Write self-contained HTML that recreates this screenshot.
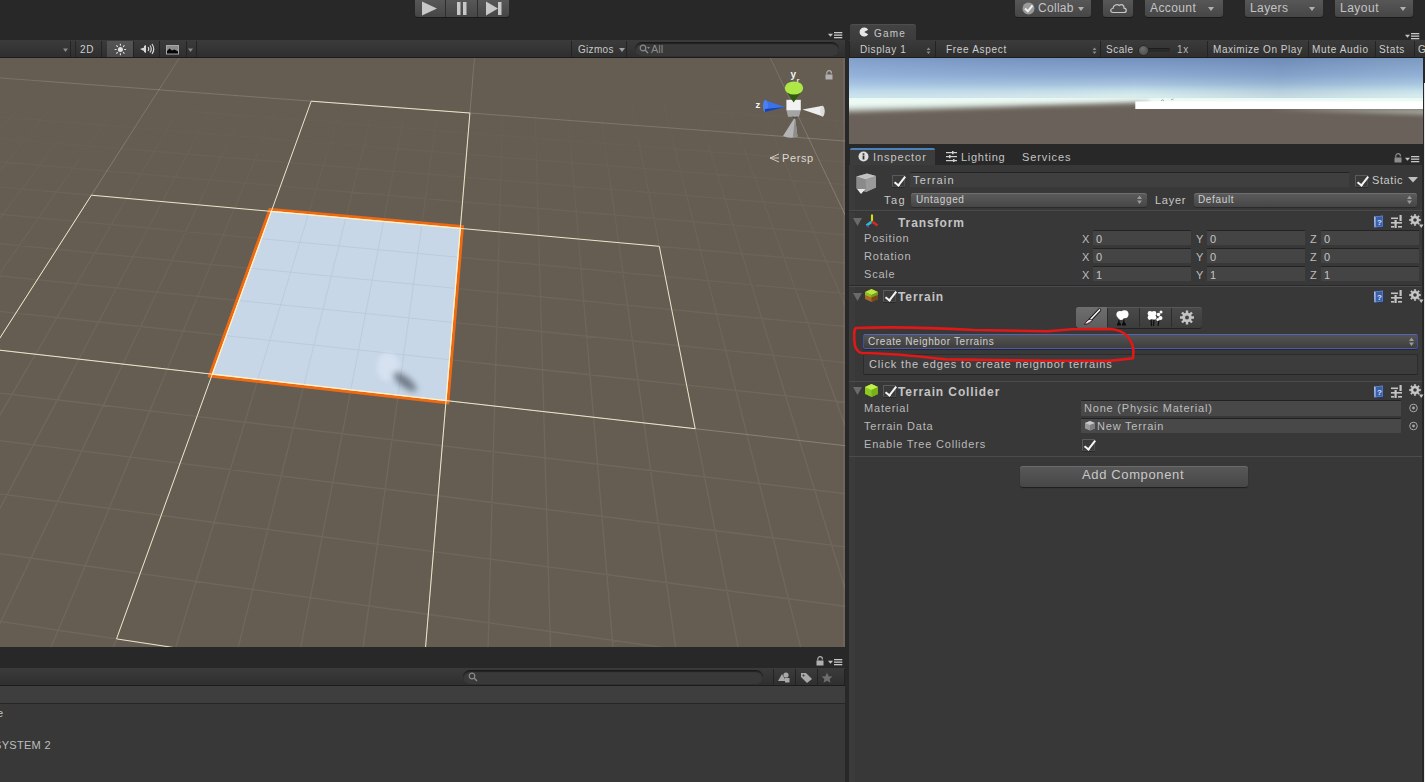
<!DOCTYPE html>
<html><head><meta charset="utf-8">
<style>
*{box-sizing:border-box;margin:0;padding:0}
html,body{width:1425px;height:782px;overflow:hidden;background:#282828;font-family:"Liberation Sans",sans-serif;color:#b4b4b4;font-size:11px}
.a{position:absolute}
.t{position:absolute;white-space:nowrap;line-height:1}
/* generic toolbar */
.tb{background:linear-gradient(#3b3b3b,#2f2f2f);border-bottom:1px solid #1c1c1c}
.btn{background:linear-gradient(#5a5a5a,#464646);border-radius:3px;box-shadow:0 1px 0 #1a1a1a, inset 0 1px 0 #6a6a6a}
.sep{position:absolute;width:1px;background:#232323}
.field{position:absolute;background:#454545;border-top:1px solid #202020;}
.lbl{position:absolute;white-space:nowrap;line-height:1;color:#b9b9b9;font-size:11px;letter-spacing:0.8px}
.hdr{position:absolute;white-space:nowrap;line-height:1;color:#c4c4c4;font-size:12px;font-weight:bold;letter-spacing:0.9px}
.ln{position:absolute;height:1px;left:849px;width:573px}
.dd{background:linear-gradient(#5c5c5c,#464646);border-radius:3px;box-shadow:0 1px 0 #2a2a2a, inset 0 1px 0 #6e6e6e}
.chk{width:13px;height:12px;background:#3a3a3a;border:1px solid #5a5a5a;border-bottom-color:#4a4a4a;border-right-color:#4e4e4e;border-radius:1px;box-shadow:0 1px 0 #2a2a2a}
.chk::after{content:"";position:absolute;left:4px;top:-2px;width:3.5px;height:10px;border:solid #f6f6f6;border-width:0 2.4px 2.4px 0;transform:rotate(38deg)}
.xyz{position:absolute;left:1081px;width:338px;height:16px}
.xyz span{position:absolute;top:4px;font-size:11px;color:#bdbdbd;line-height:1}
.xyz i{position:absolute;top:0;height:15px;background:#444;border-top:1px solid #232323;font-style:normal;font-size:11px;color:#c4c4c4;padding:3px 0 0 3px;line-height:1}
.xyz span:nth-child(1){left:1px}.xyz i:nth-child(2){left:12px;width:98px}
.xyz span:nth-child(3){left:115px}.xyz i:nth-child(4){left:126px;width:98px}
.xyz span:nth-child(5){left:229px}.xyz i:nth-child(6){left:240px;width:98px}
.help{width:11px;height:13px;background:linear-gradient(135deg,#8aa8d8,#3a5a98);border-radius:1px;box-shadow:1px 1px 0 #1c2c50}
.help::after{content:"?";position:absolute;left:2.5px;top:1px;font-size:9px;font-weight:bold;color:#e0e8f8;line-height:1}
.preset{width:11px;height:13px;background:linear-gradient(#c8c8c8,#c8c8c8) 0 3px/7px 1.5px no-repeat,linear-gradient(#c8c8c8,#c8c8c8) 0 8px/4px 1.5px no-repeat,linear-gradient(#c8c8c8,#c8c8c8) 6px 8px/5px 1.5px no-repeat,linear-gradient(#c8c8c8,#c8c8c8) 8px 0/2.5px 6px no-repeat,linear-gradient(#c8c8c8,#c8c8c8) 4px 6px/2.5px 6px no-repeat}
.gear{width:14px;height:14px}
.gear::before{content:"";position:absolute;left:1px;top:1px;width:10px;height:10px;border-radius:50%;background:radial-gradient(circle,#383838 2px,#c4c4c4 2.5px);box-shadow:0 -2px 0 -3px #c4c4c4}
.gear::after{content:"";position:absolute;left:10px;top:9px;border:3px solid transparent;border-top:4px solid #c4c4c4}
</style></head><body>

<!-- ============ TOP TOOLBAR ============ -->
<div class="a btn" style="left:415px;top:-3px;width:94px;height:20px;border-radius:0 0 3px 3px"></div>
<div class="sep" style="left:445px;top:0;height:17px;background:#2e2e2e"></div>
<div class="sep" style="left:477px;top:0;height:17px;background:#2e2e2e"></div>
<svg class="a" style="left:415px;top:0" width="94" height="18">
  <path d="M7 1.5 L22 8.5 L7 15.5 Z" fill="#c8c8c8"/>
  <rect x="42" y="2" width="3.5" height="13" fill="#c8c8c8"/><rect x="48" y="2" width="3.5" height="13" fill="#c8c8c8"/>
  <path d="M71 1.5 L83 8.5 L71 15.5 Z" fill="#c8c8c8"/><rect x="83" y="2" width="3.5" height="13" fill="#c8c8c8"/>
</svg>

<div class="a btn" style="left:1015px;top:-3px;width:76px;height:20px"></div>
<svg class="a" style="left:1022px;top:2px" width="14" height="14"><circle cx="6.5" cy="6.5" r="6" fill="#9a9a9a"/><path d="M3 6.5 L5.8 9.3 L10.5 3.5" stroke="#f0f0f0" stroke-width="2" fill="none"/></svg>
<div class="t" style="left:1038px;top:2px;font-size:12px;color:#c4c4c4;letter-spacing:0.3px">Collab</div>
<svg class="a" style="left:1078px;top:7px" width="7" height="5"><path d="M0 0 L6 0 L3 4 Z" fill="#b0b0b0"/></svg>

<div class="a btn" style="left:1103px;top:-3px;width:30px;height:20px"></div>
<svg class="a" style="left:1109px;top:2px" width="19" height="12"><path d="M4 10.5 C1 10.5 1 6.5 4 6.5 C4 3 8 1.5 10.5 3.5 C12 1.5 15.5 3 15 6.2 C18 6.5 18 10.5 15 10.5 Z" fill="none" stroke="#c8c8c8" stroke-width="1.2"/></svg>

<div class="a btn" style="left:1145px;top:-3px;width:78px;height:20px"></div>
<div class="t" style="left:1150px;top:2px;font-size:12px;color:#c4c4c4;letter-spacing:0.4px">Account</div>
<svg class="a" style="left:1208px;top:7px" width="7" height="5"><path d="M0 0 L6 0 L3 4 Z" fill="#b0b0b0"/></svg>

<div class="a btn" style="left:1245px;top:-3px;width:78px;height:20px"></div>
<div class="t" style="left:1250px;top:2px;font-size:12px;color:#c4c4c4;letter-spacing:0.4px">Layers</div>
<svg class="a" style="left:1309px;top:7px" width="7" height="5"><path d="M0 0 L6 0 L3 4 Z" fill="#b0b0b0"/></svg>

<div class="a btn" style="left:1335px;top:-3px;width:78px;height:20px"></div>
<div class="t" style="left:1340px;top:2px;font-size:12px;color:#c4c4c4;letter-spacing:0.5px">Layout</div>
<svg class="a" style="left:1400px;top:7px" width="7" height="5"><path d="M0 0 L6 0 L3 4 Z" fill="#b0b0b0"/></svg>

<!-- SCENE_START -->
<svg class="a" style="left:0;top:58px" width="845" height="589" viewBox="0 0 845 589">
<rect width="845" height="589" fill="#655c52"/>
<path d="M-85.2,26.6L-103.8,43.8M-103.8,43.8L-123.7,62.1M-39.7,12.5L-56.5,28.8M-56.5,28.8L-74.4,46.1M-11.6,14.5L-27.6,31.0M-27.6,31.0L-44.7,48.5M16.7,16.6L1.5,33.2M1.5,33.2L-14.7,50.8M45.3,18.8L30.8,35.5M30.8,35.5L15.5,53.2M74.0,20.9L60.4,37.7M60.4,37.7L46.0,55.6M103.0,23.0L90.3,40.0M90.3,40.0L76.7,58.1M132.3,25.2L120.4,42.3M120.4,42.3L107.7,60.5M201.1,13.2L191.5,29.6M191.5,29.6L181.3,47.0M230.2,15.3L221.5,31.8M221.5,31.8L212.2,49.3M259.5,17.4L251.7,34.0M251.7,34.0L243.3,51.7M289.1,19.5L282.1,36.3M282.1,36.3L274.7,54.1M319.0,21.7L312.8,38.6M312.8,38.6L306.3,56.6M349.0,23.8L343.8,40.9M343.8,40.9L338.3,59.0M379.3,26.0L375.0,43.2M375.0,43.2L370.5,61.5M413.1,11.9L409.9,28.2M409.9,28.2L406.5,45.5M443.0,13.9L440.7,30.4M440.7,30.4L438.3,47.9M503.5,18.2L503.1,34.9M503.1,34.9L502.6,52.6M534.2,20.3L534.7,37.1M534.7,37.1L535.2,55.0M565.1,22.4L566.5,39.4M566.5,39.4L568.0,57.5M596.2,24.6L598.6,41.7M598.6,41.7L601.2,59.9M627.6,26.8L631.0,44.0M655.1,12.6L659.2,29.0M659.2,29.0L663.6,46.4M686.1,14.7L691.2,31.2M691.2,31.2L696.6,48.7M717.3,16.8L723.3,33.4M723.3,33.4L729.8,51.1M748.7,18.9L755.8,35.7M755.8,35.7L763.3,53.5M812.4,23.2L821.4,40.3M821.4,40.3L831.1,58.4M844.6,25.4L854.7,42.6M866.6,11.3L877.1,27.6M877.1,27.6L888.2,44.9M898.3,13.4L909.8,29.8M909.8,29.8L922.0,47.3M697.1,17.5L739.1,20.3M739.1,20.3L781.4,23.2M781.4,23.2L824.3,26.1M824.3,26.1L867.6,29.0M867.6,29.0L911.4,32.0M493.3,20.3L534.3,23.1M534.3,23.1L575.7,26.0M575.7,26.0L617.6,29.0M617.6,29.0L660.0,31.9M660.0,31.9L702.8,34.9M702.8,34.9L746.1,38.0M746.1,38.0L789.9,41.0M789.9,41.0L834.2,44.1M834.2,44.1L879.0,47.2M879.0,47.2L924.3,50.4M248.0,20.2L287.6,23.1M287.6,23.1L327.7,26.0M327.7,26.0L368.2,28.9M368.2,28.9L409.2,31.9M409.2,31.9L450.6,34.8M450.6,34.8L492.5,37.9M492.5,37.9L534.8,40.9M534.8,40.9L577.6,44.0M577.6,44.0L620.9,47.1M620.9,47.1L664.6,50.3M664.6,50.3L708.9,53.5M-90.7,31.7L-52.1,34.7M-52.1,34.7L-13.2,37.7M-13.2,37.7L26.3,40.8M26.3,40.8L66.1,43.8M66.1,43.8L106.4,47.0M106.4,47.0L147.2,50.1M147.2,50.1L188.4,53.3M-110.6,50.0L-70.9,53.2" stroke="#8a8174" stroke-opacity="0.04" stroke-width="1.4" fill="none"/>
<path d="M-123.7,62.1L-144.9,81.6M-74.4,46.1L-93.4,64.6M-93.4,64.6L-113.6,84.2M-44.7,48.5L-62.8,67.1M-62.8,67.1L-82.1,86.9M-14.7,50.8L-32.0,69.6M-32.0,69.6L-50.3,89.6M15.5,53.2L-0.8,72.1M-0.8,72.1L-18.3,92.3M46.0,55.6L30.5,74.7M30.5,74.7L14.1,95.1M76.7,58.1L62.2,77.3M62.2,77.3L46.8,97.9M107.7,60.5L94.2,79.9M94.2,79.9L79.7,100.7M181.3,47.0L170.5,65.5M170.5,65.5L158.9,85.3M212.2,49.3L202.3,68.0M202.3,68.0L191.7,87.9M243.3,51.7L234.4,70.6M234.4,70.6L224.9,90.7M274.7,54.1L266.7,73.1M266.7,73.1L258.3,93.4M306.3,56.6L299.4,75.7M299.4,75.7L292.0,96.2M338.3,59.0L332.3,78.3M332.3,78.3L326.0,99.0M370.5,61.5L365.6,81.0M406.5,45.5L402.9,63.9M402.9,63.9L399.1,83.6M438.3,47.9L435.7,66.5M435.7,66.5L432.9,86.3M502.6,52.6L502.1,71.5M502.1,71.5L501.5,91.7M535.2,55.0L535.7,74.1M535.7,74.1L536.3,94.5M568.0,57.5L569.7,76.7M569.7,76.7L571.4,97.3M601.2,59.9L603.9,79.3M603.9,79.3L606.8,100.1M631.0,44.0L634.6,62.4M634.6,62.4L638.4,82.0M663.6,46.4L668.3,64.9M668.3,64.9L673.3,84.6M696.6,48.7L702.3,67.4M702.3,67.4L708.5,87.3M729.8,51.1L736.6,70.0M736.6,70.0L743.9,90.1M763.3,53.5L771.2,72.5M771.2,72.5L779.8,92.8M831.1,58.4L841.4,77.7M841.4,77.7L852.4,98.3M854.7,42.6L865.5,60.9M865.5,60.9L876.9,80.3M888.2,44.9L900.1,63.3M900.1,63.3L912.8,83.0M922.0,47.3L935.1,65.8M935.1,65.8L949.0,85.7M708.9,53.5L753.7,56.7M753.7,56.7L799.0,60.0M799.0,60.0L844.8,63.3M844.8,63.3L891.1,66.7M891.1,66.7L938.0,70.1M188.4,53.3L230.1,56.5M230.1,56.5L272.3,59.8M272.3,59.8L315.0,63.1M315.0,63.1L358.1,66.4M358.1,66.4L401.8,69.8M401.8,69.8L446.0,73.2M446.0,73.2L490.7,76.7M490.7,76.7L535.9,80.2M535.9,80.2L581.7,83.7M581.7,83.7L628.0,87.3M628.0,87.3L674.9,90.9M-70.9,53.2L-30.7,56.4M-30.7,56.4L9.9,59.7M9.9,59.7L51.0,63.0M51.0,63.0L92.6,66.3M92.6,66.3L134.7,69.7M134.7,69.7L177.2,73.1M177.2,73.1L220.3,76.5M220.3,76.5L263.9,80.0M263.9,80.0L307.9,83.6M307.9,83.6L352.6,87.1M352.6,87.1L397.7,90.8M-131.8,69.5L-90.9,73.0M-90.9,73.0L-49.4,76.4M-49.4,76.4L-7.5,79.9M-7.5,79.9L34.9,83.4M34.9,83.4L77.8,87.0M77.8,87.0L121.3,90.6" stroke="#8a8174" stroke-opacity="0.09" stroke-width="1.4" fill="none"/>
<path d="M-144.9,81.6L-167.5,102.4M-167.5,102.4L-191.7,124.7M-113.6,84.2L-135.3,105.2M-135.3,105.2L-158.5,127.7M-82.1,86.9L-102.8,108.1M-102.8,108.1L-124.9,130.8M-50.3,89.6L-70.0,111.0M-70.0,111.0L-91.1,133.9M-18.3,92.3L-36.9,113.9M-36.9,113.9L-56.9,137.1M14.1,95.1L-3.5,116.9M-3.5,116.9L-22.4,140.2M46.8,97.9L30.2,119.9M30.2,119.9L12.5,143.4M79.7,100.7L64.3,122.9M158.9,85.3L146.6,106.4M146.6,106.4L133.3,129.0M191.7,87.9L180.5,109.2M180.5,109.2L168.4,132.1M224.9,90.7L214.7,112.2M214.7,112.2L203.8,135.2M258.3,93.4L249.2,115.1M249.2,115.1L239.5,138.3M292.0,96.2L284.1,118.1M284.1,118.1L275.6,141.5M326.0,99.0L319.2,121.0M319.2,121.0L312.0,144.7M365.6,81.0L360.4,101.8M360.4,101.8L354.8,124.1M399.1,83.6L395.0,104.6M395.0,104.6L390.6,127.1M432.9,86.3L430.0,107.5M430.0,107.5L426.9,130.2M501.5,91.7L501.0,113.3M501.0,113.3L500.3,136.5M536.3,94.5L536.9,116.3M536.9,116.3L537.6,139.6M571.4,97.3L573.3,119.2M573.3,119.2L575.3,142.8M606.8,100.1L609.9,122.3M638.4,82.0L642.6,102.9M642.6,102.9L647.0,125.3M673.3,84.6L678.6,105.7M678.6,105.7L684.3,128.4M708.5,87.3L715.0,108.6M715.0,108.6L722.1,131.5M743.9,90.1L751.8,111.5M751.8,111.5L760.2,134.6M779.8,92.8L788.9,114.5M788.9,114.5L798.6,137.7M852.4,98.3L864.1,120.4M864.1,120.4L876.7,144.1M876.9,80.3L889.2,101.2M889.2,101.2L902.3,123.5M912.8,83.0L926.3,104.0M926.3,104.0L940.8,126.5M949.0,85.7L963.8,106.9M963.8,106.9L979.7,129.6M674.9,90.9L722.3,94.6M722.3,94.6L770.4,98.3M770.4,98.3L819.0,102.1M819.0,102.1L868.2,105.9M868.2,105.9L918.1,109.7M918.1,109.7L968.5,113.6M397.7,90.8L443.4,94.4M443.4,94.4L489.7,98.1M489.7,98.1L536.5,101.9M536.5,101.9L583.9,105.7M583.9,105.7L632.0,109.5M632.0,109.5L680.6,113.4M680.6,113.4L729.8,117.4M729.8,117.4L779.6,121.4M779.6,121.4L830.1,125.4M830.1,125.4L881.2,129.5M881.2,129.5L933.0,133.7M121.3,90.6L165.2,94.3M165.2,94.3L209.7,98.0M209.7,98.0L254.8,101.7M254.8,101.7L300.4,105.5M300.4,105.5L346.6,109.4M346.6,109.4L393.3,113.2M393.3,113.2L440.7,117.2M440.7,117.2L488.6,121.2M488.6,121.2L537.2,125.2M537.2,125.2L586.4,129.3M586.4,129.3L636.2,133.4M-154.5,90.4L-112.3,94.1M-112.3,94.1L-69.5,97.8M-69.5,97.8L-26.2,101.5M-26.2,101.5L17.6,105.3M17.6,105.3L62.0,109.2M62.0,109.2L106.9,113.0M106.9,113.0L152.4,117.0M152.4,117.0L198.4,121.0M198.4,121.0L245.1,125.0M245.1,125.0L292.3,129.1M292.3,129.1L340.2,133.2M-178.8,112.9L-135.2,116.8M-135.2,116.8L-91.0,120.8M-91.0,120.8L-46.3,124.8M-46.3,124.8L-1.0,128.9M-1.0,128.9L44.9,133.0" stroke="#8a8174" stroke-opacity="0.13" stroke-width="1.4" fill="none"/>
<path d="M-191.7,124.7L-217.7,148.6M-217.7,148.6L-245.6,174.4M-158.5,127.7L-183.4,151.9M-183.4,151.9L-210.2,177.9M-124.9,130.8L-148.7,155.2M-148.7,155.2L-174.3,181.5M-91.1,133.9L-113.7,158.6M-113.7,158.6L-138.1,185.1M-56.9,137.1L-78.4,161.9M-78.4,161.9L-101.5,188.7M-22.4,140.2L-42.7,165.4M-42.7,165.4L-64.5,192.4M12.5,143.4L-6.6,168.8M-6.6,168.8L-27.2,196.2M64.3,122.9L47.7,146.7M47.7,146.7L29.8,172.3M133.3,129.0L119.1,153.2M119.1,153.2L103.8,179.4M168.4,132.1L155.4,156.6M155.4,156.6L141.4,183.0M203.8,135.2L192.0,159.9M192.0,159.9L179.4,186.6M239.5,138.3L229.0,163.3M229.0,163.3L217.8,190.3M275.6,141.5L266.4,166.8M266.4,166.8L256.6,194.0M312.0,144.7L304.2,170.2M354.8,124.1L348.8,148.0M348.8,148.0L342.3,173.7M390.6,127.1L385.9,151.3M385.9,151.3L380.9,177.3M426.9,130.2L423.5,154.6M423.5,154.6L419.8,180.9M500.3,136.5L499.7,161.3M499.7,161.3L498.9,188.1M537.6,139.6L538.3,164.7M538.3,164.7L539.1,191.8M575.3,142.8L577.4,168.2M577.4,168.2L579.7,195.6M609.9,122.3L613.3,146.1M613.3,146.1L616.9,171.7M647.0,125.3L651.7,149.3M651.7,149.3L656.8,175.2M684.3,128.4L690.5,152.6M690.5,152.6L697.0,178.8M722.1,131.5L729.6,156.0M729.6,156.0L737.8,182.4M760.2,134.6L769.2,159.3M769.2,159.3L778.9,186.0M798.6,137.7L809.1,162.7M809.1,162.7L820.5,189.7M876.7,144.1L890.3,169.6M902.3,123.5L916.4,147.4M916.4,147.4L931.5,173.1M940.8,126.5L956.4,150.7M956.4,150.7L973.1,176.7M979.7,129.6L996.8,154.0M996.8,154.0L1015.2,180.3M933.0,133.7L985.5,137.9M636.2,133.4L686.7,137.6M686.7,137.6L737.8,141.9M737.8,141.9L789.6,146.2M789.6,146.2L842.1,150.6M842.1,150.6L895.3,155.0M895.3,155.0L949.2,159.5M949.2,159.5L1003.8,164.0M340.2,133.2L388.6,137.4M388.6,137.4L437.7,141.7M437.7,141.7L487.5,146.0M487.5,146.0L537.9,150.3M537.9,150.3L589.0,154.7M589.0,154.7L640.8,159.2M640.8,159.2L693.3,163.8M693.3,163.8L746.4,168.4M746.4,168.4L800.4,173.0M800.4,173.0L855.0,177.7M855.0,177.7L910.5,182.5M44.9,133.0L91.4,137.2M91.4,137.2L138.5,141.4M138.5,141.4L186.2,145.7M186.2,145.7L234.6,150.1M234.6,150.1L283.6,154.5M283.6,154.5L333.2,158.9M333.2,158.9L383.6,163.5M383.6,163.5L434.6,168.1M434.6,168.1L486.3,172.7M486.3,172.7L538.7,177.4M538.7,177.4L591.8,182.2M-205.0,137.0L-159.9,141.2M-159.9,141.2L-114.2,145.5M-114.2,145.5L-67.9,149.8M-67.9,149.8L-21.0,154.2M-21.0,154.2L26.5,158.7M26.5,158.7L74.7,163.2M74.7,163.2L123.6,167.8M123.6,167.8L173.1,172.4M173.1,172.4L223.3,177.1M223.3,177.1L274.2,181.9M-233.2,162.9L-186.5,167.5M-186.5,167.5L-139.2,172.1M-139.2,172.1L-91.2,176.8M-91.2,176.8L-42.6,181.6" stroke="#8a8174" stroke-opacity="0.17" stroke-width="1.4" fill="none"/>
<path d="M-245.6,174.4L-275.8,202.1M-275.8,202.1L-308.5,232.2M-210.2,177.9L-239.1,206.0M-239.1,206.0L-270.4,236.3M-174.3,181.5L-202.0,209.8M-202.0,209.8L-231.9,240.6M-138.1,185.1L-164.5,213.7M-164.5,213.7L-193.0,244.8M-101.5,188.7L-126.5,217.7M-126.5,217.7L-153.7,249.1M-64.5,192.4L-88.2,221.7M-88.2,221.7L-113.8,253.5M-27.2,196.2L-49.4,225.7M29.8,172.3L10.6,199.9M10.6,199.9L-10.2,229.8M103.8,179.4L87.3,207.6M87.3,207.6L69.5,238.1M141.4,183.0L126.3,211.5M126.3,211.5L110.0,242.4M179.4,186.6L165.8,215.4M165.8,215.4L151.0,246.7M217.8,190.3L205.6,219.4M205.6,219.4L192.4,251.0M256.6,194.0L245.9,223.4M245.9,223.4L234.3,255.4M304.2,170.2L295.8,197.7M295.8,197.7L286.6,227.5M342.3,173.7L335.4,201.5M335.4,201.5L327.8,231.6M380.9,177.3L375.4,205.4M375.4,205.4L369.5,235.8M419.8,180.9L415.9,209.2M415.9,209.2L411.6,240.0M498.9,188.1L498.1,217.1M498.1,217.1L497.3,248.5M539.1,191.8L540.0,221.1M540.0,221.1L540.9,252.9M579.7,195.6L582.2,225.2M616.9,171.7L620.8,199.3M620.8,199.3L625.0,229.2M656.8,175.2L662.2,203.1M662.2,203.1L668.2,233.4M697.0,178.8L704.2,207.0M704.2,207.0L711.9,237.6M737.8,182.4L746.6,210.9M746.6,210.9L756.1,241.8M778.9,186.0L789.4,214.8M789.4,214.8L800.8,246.1M820.5,189.7L832.7,218.8M832.7,218.8L846.0,250.4M890.3,169.6L904.9,197.1M904.9,197.1L920.8,226.9M931.5,173.1L947.8,200.9M947.8,200.9L965.5,231.0M973.1,176.7L991.2,204.8M991.2,204.8L1010.8,235.2M1015.2,180.3L1035.1,208.6M1035.1,208.6L1056.6,239.4M910.5,182.5L966.7,187.4M966.7,187.4L1023.6,192.3M591.8,182.2L645.7,187.1M645.7,187.1L700.4,192.0M700.4,192.0L755.8,197.0M755.8,197.0L812.0,202.0M812.0,202.0L869.0,207.2M869.0,207.2L926.9,212.4M926.9,212.4L985.6,217.7M985.6,217.7L1045.1,223.0M274.2,181.9L325.8,186.8M325.8,186.8L378.1,191.7M378.1,191.7L431.1,196.6M431.1,196.6L485.0,201.7M485.0,201.7L539.5,206.8M539.5,206.8L594.9,212.0M594.9,212.0L651.1,217.3M651.1,217.3L708.1,222.6M708.1,222.6L766.0,228.1M766.0,228.1L824.7,233.6M824.7,233.6L884.3,239.2M-42.6,181.6L6.7,186.4M6.7,186.4L56.7,191.3M56.7,191.3L107.4,196.3M107.4,196.3L158.9,201.3M158.9,201.3L211.0,206.5M211.0,206.5L263.9,211.6M263.9,211.6L317.6,216.9M317.6,216.9L372.1,222.2M372.1,222.2L427.4,227.7M427.4,227.7L483.5,233.2M483.5,233.2L540.5,238.7M-263.7,191.0L-215.3,196.0M-215.3,196.0L-166.3,201.0M-166.3,201.0L-116.5,206.1M-116.5,206.1L-66.0,211.3M-66.0,211.3L-14.8,216.5M-14.8,216.5L37.2,221.8M37.2,221.8L89.9,227.3M89.9,227.3L143.4,232.7M143.4,232.7L197.7,238.3M-296.8,221.5L-246.6,226.9M-246.6,226.9L-195.7,232.3M-195.7,232.3L-144.0,237.9M-144.0,237.9L-91.5,243.5" stroke="#8a8174" stroke-opacity="0.21" stroke-width="1.4" fill="none"/>
<path d="M-308.5,232.2L-343.9,264.8M-343.9,264.8L-382.5,300.4M-270.4,236.3L-304.4,269.4M-304.4,269.4L-341.5,305.3M-231.9,240.6L-264.5,273.9M-264.5,273.9L-300.0,310.3M-193.0,244.8L-224.0,278.6M-224.0,278.6L-257.9,315.4M-153.7,249.1L-183.1,283.3M-183.1,283.3L-215.4,320.5M-113.8,253.5L-141.8,288.0M-141.8,288.0L-172.3,325.7M-49.4,225.7L-73.6,257.8M-73.6,257.8L-99.9,292.8M-10.2,229.8L-32.9,262.3M-32.9,262.3L-57.5,297.7M69.5,238.1L50.0,271.4M50.0,271.4L28.8,307.6M110.0,242.4L92.2,276.0M92.2,276.0L72.8,312.6M151.0,246.7L134.9,280.6M134.9,280.6L117.3,317.7M192.4,251.0L178.1,285.3M178.1,285.3L162.4,322.9M234.3,255.4L221.8,290.1M286.6,227.5L276.8,259.8M276.8,259.8L266.0,294.9M327.8,231.6L319.7,264.3M319.7,264.3L310.7,299.8M369.5,235.8L363.1,268.8M363.1,268.8L356.1,304.8M411.6,240.0L407.0,273.4M407.0,273.4L401.9,309.8M497.3,248.5L496.4,282.7M496.4,282.7L495.4,320.0M540.9,252.9L541.9,287.4M541.9,287.4L542.9,325.2M582.2,225.2L584.9,257.3M584.9,257.3L587.9,292.2M625.0,229.2L629.5,261.7M629.5,261.7L634.5,297.1M668.2,233.4L674.6,266.2M674.6,266.2L681.7,302.0M711.9,237.6L720.3,270.8M720.3,270.8L729.4,307.0M756.1,241.8L766.4,275.4M766.4,275.4L777.7,312.0M800.8,246.1L813.2,280.0M813.2,280.0L826.7,317.1M846.0,250.4L860.4,284.8M860.4,284.8L876.2,322.3M920.8,226.9L938.0,259.2M938.0,259.2L956.7,294.4M965.5,231.0L984.8,263.7M984.8,263.7L1005.7,299.3M1010.8,235.2L1032.1,268.2M1032.1,268.2L1055.3,304.2M1056.6,239.4L1080.0,272.8M1080.0,272.8L1105.5,309.2M884.3,239.2L944.8,244.8M944.8,244.8L1006.2,250.6M1006.2,250.6L1068.5,256.4M540.5,238.7L598.3,244.4M598.3,244.4L657.0,250.1M657.0,250.1L716.5,256.0M716.5,256.0L777.0,261.9M777.0,261.9L838.5,267.9M838.5,267.9L900.9,274.0M900.9,274.0L964.3,280.3M964.3,280.3L1028.7,286.6M1028.7,286.6L1094.1,293.0M197.7,238.3L252.8,244.0M252.8,244.0L308.8,249.7M308.8,249.7L365.6,255.5M365.6,255.5L423.3,261.4M423.3,261.4L481.9,267.4M481.9,267.4L541.5,273.5M541.5,273.5L601.9,279.7M601.9,279.7L663.3,286.0M663.3,286.0L725.7,292.4M725.7,292.4L789.1,298.9M789.1,298.9L853.6,305.5M-91.5,243.5L-38.2,249.3M-38.2,249.3L15.9,255.1M15.9,255.1L70.8,261.0M70.8,261.0L126.6,267.0M126.6,267.0L183.2,273.0M183.2,273.0L240.7,279.2M240.7,279.2L299.2,285.5M299.2,285.5L358.6,291.9M358.6,291.9L418.9,298.4M418.9,298.4L480.2,305.0M-372.1,290.8L-317.9,297.3M-317.9,297.3L-262.7,303.8M-262.7,303.8L-206.7,310.5" stroke="#8a8174" stroke-opacity="0.26" stroke-width="1.4" fill="none"/>
<path d="M-382.5,300.4L-424.8,339.3M-424.8,339.3L-471.2,382.0M-471.2,382.0L-522.4,429.2M-522.4,429.2L-579.2,481.5M-579.2,481.5L-642.5,539.8M-642.5,539.8L-713.6,605.3M-341.5,305.3L-382.1,344.7M-382.1,344.7L-426.7,388.0M-426.7,388.0L-475.9,435.8M-475.9,435.8L-530.6,488.8M-530.6,488.8L-591.6,548.1M-591.6,548.1L-660.2,614.6M-300.0,310.3L-338.8,350.2M-338.8,350.2L-381.6,394.1M-381.6,394.1L-428.8,442.5M-428.8,442.5L-481.3,496.3M-481.3,496.3L-539.9,556.4M-539.9,556.4L-605.8,624.1M-257.9,315.4L-295.0,355.8M-295.0,355.8L-335.9,400.2M-335.9,400.2L-381.0,449.3M-381.0,449.3L-431.2,503.9M-431.2,503.9L-487.3,565.0M-487.3,565.0L-550.5,633.7M-215.4,320.5L-250.7,361.4M-250.7,361.4L-289.5,406.4M-289.5,406.4L-332.5,456.2M-332.5,456.2L-380.4,511.6M-380.4,511.6L-433.9,573.7M-433.9,573.7L-494.3,643.5M-172.3,325.7L-205.7,367.1M-205.7,367.1L-242.5,412.8M-242.5,412.8L-283.3,463.3M-283.3,463.3L-328.8,519.5M-328.8,519.5L-379.7,582.5M-379.7,582.5L-437.0,653.5M-99.9,292.8L-128.6,331.0M-128.6,331.0L-160.2,372.9M-160.2,372.9L-194.9,419.2M-194.9,419.2L-233.4,470.4M-233.4,470.4L-276.4,527.4M-276.4,527.4L-324.5,591.4M-324.5,591.4L-378.8,663.6M-57.5,297.7L-84.4,336.3M-84.4,336.3L-114.0,378.8M-114.0,378.8L-146.6,425.6M-146.6,425.6L-182.8,477.6M-182.8,477.6L-223.2,535.5M-223.2,535.5L-268.4,600.5M-268.4,600.5L-319.6,674.0M28.8,307.6L5.7,347.2M5.7,347.2L-19.8,390.8M-19.8,390.8L-48.0,438.9M-48.0,438.9L-79.3,492.4M-79.3,492.4L-114.2,552.1M-114.2,552.1L-153.5,619.2M-153.5,619.2L-198.0,695.2M72.8,312.6L51.6,352.7M51.6,352.7L28.2,396.9M28.2,396.9L2.4,445.7M2.4,445.7L-26.3,499.9M-26.3,499.9L-58.4,560.5M-58.4,560.5L-94.6,628.7M-94.6,628.7L-135.5,706.1M117.3,317.7L98.1,358.3M98.1,358.3L76.9,403.1M76.9,403.1L53.5,452.5M53.5,452.5L27.4,507.6M27.4,507.6L-1.8,569.1M-1.8,569.1L-34.6,638.5M-34.6,638.5L-71.9,717.2M162.4,322.9L145.2,364.0M145.2,364.0L126.2,409.3M126.2,409.3L105.3,459.5M105.3,459.5L81.9,515.4M81.9,515.4L55.8,577.9M55.8,577.9L26.4,648.4M26.4,648.4L-7.1,728.5M221.8,290.1L208.0,328.1M208.0,328.1L192.9,369.8M192.9,369.8L176.3,415.7M176.3,415.7L157.9,466.6M157.9,466.6L137.3,523.3M137.3,523.3L114.3,586.8M114.3,586.8L88.4,658.4M88.4,658.4L58.9,740.0M266.0,294.9L254.2,333.4M254.2,333.4L241.3,375.6M241.3,375.6L227.0,422.2M227.0,422.2L211.2,473.8M211.2,473.8L193.6,531.3M193.6,531.3L173.8,595.8M173.8,595.8L151.5,668.7M151.5,668.7L126.1,751.7M310.7,299.8L301.0,338.8M301.0,338.8L290.3,381.5M290.3,381.5L278.5,428.7M278.5,428.7L265.4,481.0M265.4,481.0L250.7,539.4M250.7,539.4L234.3,605.0M234.3,605.0L215.7,679.1M215.7,679.1L194.6,763.6M356.1,304.8L348.4,344.2M348.4,344.2L340.0,387.5M340.0,387.5L330.6,435.3M330.6,435.3L320.3,488.4M320.3,488.4L308.8,547.7M308.8,547.7L295.8,614.3M295.8,614.3L281.1,689.7M281.1,689.7L264.4,775.8M401.9,309.8L396.4,349.7M396.4,349.7L390.3,393.6M390.3,393.6L383.6,442.1M383.6,442.1L376.1,495.9M376.1,495.9L367.7,556.1M367.7,556.1L358.3,623.8M358.3,623.8L347.7,700.5M347.7,700.5L335.5,788.2M495.4,320.0L494.2,360.9M494.2,360.9L493.0,405.9M493.0,405.9L491.7,455.8M491.7,455.8L490.2,511.3M490.2,511.3L488.5,573.3M488.5,573.3L486.6,643.3M486.6,643.3L484.4,722.7M484.4,722.7L482.0,813.7M542.9,325.2L544.1,366.6M544.1,366.6L545.4,412.3M545.4,412.3L546.9,462.8M546.9,462.8L548.5,519.1M548.5,519.1L550.3,582.2M550.3,582.2L552.4,653.3M552.4,653.3L554.7,734.2M554.7,734.2L557.4,826.9M587.9,292.2L591.1,330.5M591.1,330.5L594.7,372.4M594.7,372.4L598.6,418.7M598.6,418.7L602.9,469.9M602.9,469.9L607.8,527.1M607.8,527.1L613.2,591.1M613.2,591.1L619.3,663.5M619.3,663.5L626.3,745.8M626.3,745.8L634.3,840.3M634.5,297.1L639.9,335.8M639.9,335.8L645.9,378.3M645.9,378.3L652.5,425.2M652.5,425.2L659.8,477.2M659.8,477.2L668.0,535.2M668.0,535.2L677.1,600.2M677.1,600.2L687.4,673.8M687.4,673.8L699.2,757.6M699.2,757.6L712.8,854.0M681.7,302.0L689.4,341.2M689.4,341.2L697.8,384.2M697.8,384.2L707.2,431.8M707.2,431.8L717.5,484.5M717.5,484.5L729.1,543.4M729.1,543.4L742.1,609.5M742.1,609.5L756.8,684.3M756.8,684.3L773.5,769.7M773.5,769.7L792.8,867.9M729.4,307.0L739.4,346.7M739.4,346.7L750.4,390.3M750.4,390.3L762.6,438.4M762.6,438.4L776.1,492.0M776.1,492.0L791.2,551.7M791.2,551.7L808.1,618.9M808.1,618.9L827.3,695.0M827.3,695.0L849.3,782.0M849.3,782.0L874.6,882.2M777.7,312.0L790.1,352.2M790.1,352.2L803.7,396.4M803.7,396.4L818.8,445.2M818.8,445.2L835.5,499.5M835.5,499.5L854.3,560.2M854.3,560.2L875.3,628.5M875.3,628.5L899.2,706.0M899.2,706.0L926.5,794.5M926.5,794.5L958.0,896.7M826.7,317.1L841.5,357.8M841.5,357.8L857.8,402.6M857.8,402.6L875.8,452.1M875.8,452.1L895.9,507.2M895.9,507.2L918.4,568.8M918.4,568.8L943.6,638.3M943.6,638.3L972.4,717.1M972.4,717.1L1005.2,807.3M1005.2,807.3L1043.2,911.6M876.2,322.3L893.5,363.5M893.5,363.5L912.6,408.9M912.6,408.9L933.7,459.1M933.7,459.1L957.2,515.0M957.2,515.0L983.5,577.6M983.5,577.6L1013.2,648.2M1013.2,648.2L1046.9,728.4M1046.9,728.4L1085.5,820.3M1085.5,820.3L1130.2,926.8M956.7,294.4L977.2,332.8M977.2,332.8L999.6,375.1M999.6,375.1L1024.4,421.7M1024.4,421.7L1051.9,473.3M1051.9,473.3L1082.6,530.9M1082.6,530.9L1117.0,595.5M1117.0,595.5L1155.8,668.5M1155.8,668.5L1200.1,751.7M1200.1,751.7L1250.9,847.2M1250.9,847.2L1310.0,958.1M1005.7,299.3L1028.6,338.2M1028.6,338.2L1053.8,381.0M1053.8,381.0L1081.6,428.2M1081.6,428.2L1112.4,480.6M1112.4,480.6L1146.8,539.1M1146.8,539.1L1185.4,604.7M1185.4,604.7L1229.1,679.0M1229.1,679.0L1278.8,763.6M1278.8,763.6L1336.1,861.0M1336.1,861.0L1402.8,974.3M1055.3,304.2L1080.7,343.6M1080.7,343.6L1108.6,387.0M1108.6,387.0L1139.5,434.9M1139.5,434.9L1173.7,488.0M1173.7,488.0L1212.0,547.4M1212.0,547.4L1254.9,614.1M1254.9,614.1L1303.6,689.6M1303.6,689.6L1359.1,775.8M1359.1,775.8L1423.1,875.1M1423.1,875.1L1497.7,990.8M1105.5,309.2L1133.5,349.1M1133.5,349.1L1164.2,393.1M1164.2,393.1L1198.2,441.6M1198.2,441.6L1236.0,495.5M1236.0,495.5L1278.2,555.8M1278.2,555.8L1325.7,623.6M1325.7,623.6L1379.5,700.4M1379.5,700.4L1441.0,788.2M1441.0,788.2L1511.9,889.6M1511.9,889.6L1594.7,1007.8M853.6,305.5L919.1,312.3M919.1,312.3L985.7,319.1M985.7,319.1L1053.4,326.0M1053.4,326.0L1122.2,333.1M480.2,305.0L542.6,311.7M542.6,311.7L605.9,318.5M605.9,318.5L670.3,325.4M670.3,325.4L735.8,332.4M735.8,332.4L802.4,339.6M802.4,339.6L870.2,346.9M870.2,346.9L939.1,354.3M939.1,354.3L1009.2,361.8M1009.2,361.8L1080.6,369.5M1080.6,369.5L1153.2,377.3M-206.7,310.5L-149.7,317.3M-149.7,317.3L-91.8,324.2M-91.8,324.2L-32.9,331.2M-32.9,331.2L27.0,338.3M27.0,338.3L87.9,345.5M87.9,345.5L149.8,352.9M149.8,352.9L212.9,360.4M212.9,360.4L277.0,368.0M277.0,368.0L342.2,375.8M342.2,375.8L408.6,383.7M408.6,383.7L476.3,391.7M476.3,391.7L545.1,399.9M545.1,399.9L615.2,408.3M615.2,408.3L686.6,416.7M686.6,416.7L759.3,425.4M759.3,425.4L833.4,434.2M833.4,434.2L908.9,443.2M908.9,443.2L985.8,452.3M985.8,452.3L1064.2,461.7M1064.2,461.7L1144.2,471.2M1144.2,471.2L1225.7,480.9M-415.3,330.5L-358.7,337.6M-358.7,337.6L-301.2,344.9M-301.2,344.9L-242.7,352.2M-242.7,352.2L-183.2,359.7M-183.2,359.7L-122.6,367.3M-122.6,367.3L-61.0,375.0M-61.0,375.0L1.7,382.9M1.7,382.9L65.5,390.9M65.5,390.9L130.5,399.1M130.5,399.1L196.7,407.4M196.7,407.4L264.1,415.9M264.1,415.9L332.7,424.5M332.7,424.5L402.7,433.3M402.7,433.3L473.9,442.2M473.9,442.2L546.6,451.4M546.6,451.4L620.6,460.7M620.6,460.7L696.1,470.2M696.1,470.2L773.0,479.8M773.0,479.8L851.5,489.7M851.5,489.7L931.6,499.7M931.6,499.7L1013.3,510.0M1013.3,510.0L1096.6,520.5M1096.6,520.5L1181.7,531.2M1181.7,531.2L1268.6,542.1M-462.8,374.3L-403.7,382.1M-403.7,382.1L-343.7,390.1M-343.7,390.1L-282.5,398.3M-282.5,398.3L-220.2,406.6M-220.2,406.6L-156.8,415.0M-156.8,415.0L-92.1,423.6M-92.1,423.6L-26.3,432.4M-26.3,432.4L40.7,441.3M40.7,441.3L109.1,450.4M109.1,450.4L178.7,459.7M178.7,459.7L249.8,469.1M249.8,469.1L322.2,478.8M322.2,478.8L396.0,488.6M396.0,488.6L471.4,498.6M471.4,498.6L548.2,508.9M548.2,508.9L626.7,519.3M626.7,519.3L706.7,530.0M706.7,530.0L788.4,540.8M788.4,540.8L871.9,551.9M871.9,551.9L957.1,563.3M957.1,563.3L1044.2,574.9M1044.2,574.9L1133.1,586.7M1133.1,586.7L1224.0,598.8M1224.0,598.8L1317.0,611.2M-515.4,422.7L-453.7,431.5M-453.7,431.5L-390.8,440.4M-390.8,440.4L-326.7,449.4M-326.7,449.4L-261.3,458.7M-261.3,458.7L-194.7,468.1M-194.7,468.1L-126.8,477.7M-126.8,477.7L-57.6,487.5M-57.6,487.5L13.1,497.5M13.1,497.5L85.1,507.7M85.1,507.7L158.7,518.1M158.7,518.1L233.7,528.7M233.7,528.7L310.3,539.6M310.3,539.6L388.6,550.7M388.6,550.7L468.5,562.0M468.5,562.0L550.1,573.5M550.1,573.5L633.5,585.3M633.5,585.3L718.7,597.4M718.7,597.4L805.8,609.7M805.8,609.7L894.9,622.3M894.9,622.3L986.0,635.2M986.0,635.2L1079.2,648.4M1079.2,648.4L1174.5,661.9M1174.5,661.9L1272.1,675.7M1272.1,675.7L1372.0,689.8M-574.0,476.7L-509.3,486.5M-509.3,486.5L-443.3,496.4M-443.3,496.4L-376.0,506.6M-376.0,506.6L-307.3,517.0M-307.3,517.0L-237.2,527.5M-237.2,527.5L-165.7,538.3M-165.7,538.3L-92.6,549.4M-92.6,549.4L-18.0,560.6M-18.0,560.6L58.2,572.2M58.2,572.2L136.1,583.9M136.1,583.9L215.6,595.9M215.6,595.9L297.0,608.2M297.0,608.2L380.1,620.8M380.1,620.8L465.2,633.6M465.2,633.6L552.2,646.7M552.2,646.7L641.2,660.2M641.2,660.2L732.3,673.9M732.3,673.9L825.6,688.0M825.6,688.0L921.1,702.5M921.1,702.5L1018.9,717.2M1018.9,717.2L1119.2,732.4M1119.2,732.4L1221.9,747.9M1221.9,747.9L1327.2,763.8M1327.2,763.8L1435.3,780.1M-639.6,537.1L-571.7,548.1M-571.7,548.1L-502.3,559.3M-502.3,559.3L-431.5,570.8M-431.5,570.8L-359.1,582.5M-359.1,582.5L-285.1,594.5M-285.1,594.5L-209.5,606.7M-209.5,606.7L-132.2,619.2M-132.2,619.2L-53.1,632.0M-53.1,632.0L27.7,645.1M27.7,645.1L110.4,658.5M110.4,658.5L195.1,672.2M195.1,672.2L281.8,686.3M281.8,686.3L370.5,700.6M370.5,700.6L461.4,715.3M461.4,715.3L554.6,730.4M554.6,730.4L650.0,745.9M650.0,745.9L747.9,761.7M747.9,761.7L848.3,777.9M848.3,777.9L951.2,794.6M951.2,794.6L1056.9,811.7M1056.9,811.7L1165.3,829.3M1165.3,829.3L1276.7,847.3M1276.7,847.3L1391.1,865.8M1391.1,865.8L1508.6,884.8M-713.6,605.3L-642.1,617.7M-642.1,617.7L-569.0,630.5M-569.0,630.5L-494.3,643.5M-494.3,643.5L-417.7,656.9M-417.7,656.9L-339.5,670.5M-339.5,670.5L-259.3,684.5M-259.3,684.5L-177.3,698.8M-177.3,698.8L-93.2,713.4M-93.2,713.4L-7.1,728.5M-7.1,728.5L81.1,743.8M81.1,743.8L171.6,759.6M171.6,759.6L264.4,775.8M264.4,775.8L359.5,792.4M359.5,792.4L457.1,809.4M457.1,809.4L557.4,826.9M557.4,826.9L660.3,844.8M660.3,844.8L766.0,863.3M766.0,863.3L874.6,882.2M874.6,882.2L986.2,901.7M986.2,901.7L1101.0,921.7M1101.0,921.7L1219.1,942.3M1219.1,942.3L1340.7,963.5M1340.7,963.5L1465.8,985.3M1465.8,985.3L1594.7,1007.8" stroke="#8a8174" stroke-opacity="0.30" stroke-width="1.4" fill="none"/>
<path d="M216.3,-57.7L208.4,-45.4M208.4,-45.4L200.1,-32.4M200.1,-32.4L191.3,-18.7M477.9,-41.5L476.8,-28.3" stroke="#a0998c" stroke-opacity="0.26" stroke-width="1" fill="none"/>
<path d="M191.3,-18.7L182.0,-4.2M182.0,-4.2L172.2,11.1M172.2,11.1L161.8,27.4M476.8,-28.3L475.7,-14.3M475.7,-14.3L474.4,0.4M474.4,0.4L473.1,16.0M758.9,-24.1L765.7,-9.9M765.7,-9.9L772.8,5.1M772.8,5.1L780.4,21.1M-72.1,14.5L-34.6,17.3M-34.6,17.3L3.3,20.2M3.3,20.2L41.6,23.0" stroke="#a0998c" stroke-opacity="0.34" stroke-width="1" fill="none"/>
<path d="M161.8,27.4L150.7,44.6M150.7,44.6L138.9,63.0M138.9,63.0L126.4,82.6M473.1,16.0L471.8,32.6M471.8,32.6L470.3,50.2M470.3,50.2L468.8,69.0M468.8,69.0L467.1,89.0M780.4,21.1L788.5,38.0M788.5,38.0L797.0,55.9M797.0,55.9L806.2,75.1M41.6,23.0L80.3,25.9M80.3,25.9L119.4,28.8M119.4,28.8L159.0,31.8M159.0,31.8L198.9,34.8M198.9,34.8L239.4,37.8M239.4,37.8L280.2,40.8M280.2,40.8L321.6,43.9M321.6,43.9L363.3,47.1M363.3,47.1L405.6,50.2M405.6,50.2L448.4,53.4M448.4,53.4L491.6,56.6M491.6,56.6L535.3,59.9M535.3,59.9L579.6,63.2M579.6,63.2L624.3,66.5M624.3,66.5L669.6,69.9M669.6,69.9L715.4,73.3M715.4,73.3L761.7,76.8" stroke="#a0998c" stroke-opacity="0.43" stroke-width="1" fill="none"/>
<path d="M126.4,82.6L113.0,103.5M113.0,103.5L98.6,125.9M98.6,125.9L83.2,149.9M467.1,89.0L465.3,110.4M465.3,110.4L463.4,133.3M463.4,133.3L461.4,157.9M806.2,75.1L815.9,95.6M815.9,95.6L826.3,117.4M826.3,117.4L837.5,140.9M761.7,76.8L808.6,80.3M808.6,80.3L856.1,83.9M856.1,83.9L904.1,87.4M904.1,87.4L952.7,91.1" stroke="#a0998c" stroke-opacity="0.51" stroke-width="1" fill="none"/>
<path d="M83.2,149.9L66.7,175.8M66.7,175.8L48.8,203.7M48.8,203.7L29.4,234.0M29.4,234.0L8.3,266.8M8.3,266.8L-14.6,302.6M-14.6,302.6L-39.7,341.7M-39.7,341.7L-67.2,384.7M-67.2,384.7L-97.7,432.2M-97.7,432.2L-131.4,484.9M-131.4,484.9L-169.1,543.7M-169.1,543.7L-211.4,609.8M-211.4,609.8L-259.3,684.5M461.4,157.9L459.2,184.5M459.2,184.5L456.8,213.1M456.8,213.1L454.2,244.2M454.2,244.2L451.4,278.0M451.4,278.0L448.3,314.9M448.3,314.9L445.0,355.3M445.0,355.3L441.3,399.7M441.3,399.7L437.2,448.9M437.2,448.9L432.7,503.5M432.7,503.5L427.6,564.7M427.6,564.7L421.9,633.5M421.9,633.5L415.4,711.5M415.4,711.5L408.0,800.8M837.5,140.9L849.5,166.2M849.5,166.2L862.5,193.4M862.5,193.4L876.5,222.8M876.5,222.8L891.7,254.8M891.7,254.8L908.3,289.5M908.3,289.5L926.4,327.5M926.4,327.5L946.2,369.2M946.2,369.2L968.1,415.2M968.1,415.2L992.4,466.1M992.4,466.1L1019.4,522.9M1019.4,522.9L1049.7,586.5M1049.7,586.5L1083.9,658.3M1083.9,658.3L1122.8,739.9M1122.8,739.9L1167.4,833.6M1167.4,833.6L1219.1,942.3M-332.8,254.6L-280.6,260.5M-280.6,260.5L-227.7,266.5M-227.7,266.5L-173.9,272.5M-173.9,272.5L-119.3,278.7M-119.3,278.7L-63.8,285.0M-63.8,285.0L-7.4,291.4M-7.4,291.4L49.9,297.8M49.9,297.8L108.1,304.4M108.1,304.4L167.3,311.1M167.3,311.1L227.5,317.9M227.5,317.9L288.6,324.8M288.6,324.8L350.8,331.8M350.8,331.8L414.0,338.9M414.0,338.9L478.3,346.2M478.3,346.2L543.8,353.6M543.8,353.6L610.3,361.1M610.3,361.1L678.0,368.8M678.0,368.8L747.0,376.5M747.0,376.5L817.1,384.5M817.1,384.5L888.5,392.5M888.5,392.5L961.2,400.7M961.2,400.7L1035.3,409.1M1035.3,409.1L1110.7,417.6M1110.7,417.6L1187.5,426.3" stroke="#a0998c" stroke-opacity="0.60" stroke-width="1" fill="none"/>
<path d="M271.3,153.4L460.3,170.4L446.0,342.6L212.3,316.2Z" stroke="#ee6a12" stroke-width="7" fill="none" stroke-linejoin="miter"/>
<path d="M271.3,153.4L460.3,170.4L446.0,342.6L212.3,316.2Z" fill="#c7d7e8"/>
<path d="M308.3,156.7L257.9,321.3M261.4,180.7L458.0,199.2M345.8,160.1L304.1,326.5M250.6,210.3L455.4,230.4M383.6,163.5L350.8,331.8M239.0,242.5L452.5,264.4M421.8,166.9L398.1,337.1M226.3,277.7L449.4,301.7" stroke="#bac9dc" stroke-width="0.9" fill="none"/>
<path d="M311.2,43.2L469.9,55.0L460.3,170.4L271.3,153.4ZM91.4,137.2L271.3,153.4L212.3,316.2L-7.4,291.4ZM460.3,170.4L659.3,188.3L695.2,370.7L446.0,342.6ZM212.3,316.2L446.0,342.6L422.4,627.2L116.5,580.9Z" stroke="#ebe6c8" stroke-width="1" fill="none"/>
<path d="M271.3,153.4L460.3,170.4L446.0,342.6L212.3,316.2Z" stroke="#fff2c8" stroke-width="1.2" fill="none"/>
</svg>
<!-- SCENE_END -->
<!-- ============ SCENE TOOLBAR ============ -->
<svg class="a" style="left:828px;top:31.5px" width="15" height="7"><path d="M0 1.8 L5 1.8 L2.5 4.8 Z" fill="#c4c4c4"/><g fill="#c8c8c8"><rect x="6" y="0" width="8.3" height="1.3"/><rect x="6" y="2.5" width="8.3" height="1.3"/><rect x="6" y="5" width="8.3" height="1.3"/></g></svg>
<div class="a tb" style="left:0;top:40px;width:845px;height:18px"></div>
<div class="sep" style="left:70px;top:41px;height:16px"></div>
<div class="sep" style="left:75px;top:41px;height:16px;background:#262626"></div>
<div class="sep" style="left:101px;top:41px;height:16px"></div>
<div class="a" style="left:107px;top:41px;width:26px;height:16px;background:linear-gradient(#555,#4a4a4a)"></div>
<div class="sep" style="left:133px;top:41px;height:16px"></div>
<div class="sep" style="left:159px;top:41px;height:16px"></div>
<div class="sep" style="left:186px;top:41px;height:16px"></div>
<div class="sep" style="left:196px;top:41px;height:16px"></div>
<svg class="a" style="left:63px;top:48px" width="6" height="5"><path d="M0 0.5 L5 0.5 L2.5 4 Z" fill="#8a8a8a"/></svg>
<div class="t" style="left:80px;top:45px;font-size:10px;color:#cfcfcf;letter-spacing:0.6px">2D</div>
<svg class="a" style="left:112px;top:42px" width="16" height="15"><circle cx="8.4" cy="7.5" r="2.5" fill="#e0e0e0"/><path d="M12.20 7.50L14.10 7.50M11.09 10.19L12.43 11.53M8.40 11.30L8.40 13.20M5.71 10.19L4.37 11.53M4.60 7.50L2.70 7.50M5.71 4.81L4.37 3.47M8.40 3.70L8.40 1.80M11.09 4.81L12.43 3.47" stroke="#e0e0e0" stroke-width="1.1"/></svg>
<svg class="a" style="left:139px;top:43px" width="16" height="13"><path d="M1 6 L5 4.5 L5 8 Z M5 3 L7 2 L7 10 L5 9 Z" fill="#d8d8d8"/><path d="M9 4 Q10.5 6 9 8 M11 2.5 Q13.5 6 11 9.5 M13 1 Q16.5 6 13 11" stroke="#d8d8d8" stroke-width="1.2" fill="none"/></svg>
<svg class="a" style="left:166px;top:45px" width="14" height="10"><rect x="0.5" y="0.5" width="12" height="8.5" fill="#8c8c8c" stroke="#a8a8a8" stroke-width="1"/><path d="M1 8.5 L1 6 L3.5 3.5 L6 5.5 L8.5 4.5 L12 6.5 L12 8.5 Z" fill="#050505"/></svg>
<svg class="a" style="left:188px;top:48px" width="6" height="5"><path d="M0 0.5 L5 0.5 L2.5 4 Z" fill="#8a8a8a"/></svg>
<div class="sep" style="left:571px;top:41px;height:16px"></div>
<div class="sep" style="left:626px;top:41px;height:16px"></div>
<div class="t" style="left:578px;top:45px;font-size:10px;color:#c8c8c8;letter-spacing:0.3px">Gizmos</div>
<svg class="a" style="left:619px;top:48px" width="7" height="5"><path d="M0 0 L6 0 L3 4 Z" fill="#a0a0a0"/></svg>
<div class="a" style="left:635px;top:42px;width:204px;height:14px;border-radius:7px;background:#393939;border-top:1px solid #1a1a1a;box-shadow:inset 0 1px 1px #222"></div>
<svg class="a" style="left:639px;top:44px" width="12" height="10"><circle cx="4" cy="4" r="2.8" fill="none" stroke="#8a8a8a" stroke-width="1.2"/><path d="M6 6 L9 9" stroke="#8a8a8a" stroke-width="1.4"/><path d="M8 3 L11 3 L9.5 5Z" fill="#8a8a8a"/></svg>
<div class="t" style="left:651px;top:44px;font-size:11px;color:#8a8a8a">All</div>

<!-- ============ GIZMO ============ -->
<svg class="a" style="left:750px;top:65px" width="90" height="80">
  <text x="40.5" y="12.6" font-family="Liberation Sans" font-weight="bold" font-size="10" fill="#f4f4f4">y</text>
  <text x="46.5" y="17.5" font-family="Liberation Sans" font-weight="bold" font-size="7.5" fill="#e8e8e8">r</text>
  <text x="5.5" y="43" font-family="Liberation Sans" font-weight="bold" font-size="9.5" fill="#f4f4f4">z</text>
  <path d="M14 35 L35 42 L14 47 Z" fill="#3a72ec"/><ellipse cx="15.5" cy="41" rx="2.6" ry="6" fill="#4a80f0"/><path d="M15 44 L35 42 L15 47Z" fill="#1c3ea8"/>
  <path d="M73 40.8 L52.4 44.4 L73 51.6 Z" fill="#eeeeee"/><ellipse cx="72.5" cy="46.2" rx="2.2" ry="5.4" fill="#dcdcdc"/>
  <path d="M36.4 45 L50.8 45 L49 51.8 L38 51.8Z" fill="#a4a4a4"/>
  <path d="M45 52 L33 71 Q40 74 47.5 71.5 Z" fill="#b4b4b4"/><path d="M45 52 L43 72 L47.5 71.5Z" fill="#8c8c8c"/>
  <rect x="36.4" y="34.8" width="14.4" height="10.4" fill="#f2f2f2"/>
  <path d="M35.2 24.5 L43.6 37.5 L52.8 24.5 Z" fill="#2f5a12"/>
  <ellipse cx="44" cy="23" rx="9.2" ry="6.6" fill="#aee846"/>
  <path d="M43 51.5 L45 53.5 L47 51.5" fill="none" stroke="#222" stroke-width="0.8"/>
</svg>
<svg class="a" style="left:825px;top:70px" width="8" height="10"><path d="M1.8 4.5 V3 A2.3 2.3 0 0 1 6.4 3 V3.6" stroke="#b0b0b0" stroke-width="1.2" fill="none"/><rect x="0.5" y="4.5" width="7" height="5" fill="#b0b0b0"/></svg>
<svg class="a" style="left:768px;top:153px" width="12" height="10"><path d="M11 1 L2 5 L11 9" stroke="#d0cbc4" stroke-width="1" fill="none"/><path d="M2 5 L11 5" stroke="#d0cbc4" stroke-width="1"/></svg>
<div class="t" style="left:782px;top:153px;font-size:11px;color:#ddd8d0;letter-spacing:0.6px">Persp</div>
<!-- terrain character smudge -->
<div class="a" style="left:377px;top:353px;width:22px;height:28px;border-radius:45%;background:rgba(232,240,250,0.45);filter:blur(2.5px)"></div>
<div class="a" style="left:391px;top:377px;width:28px;height:10px;border-radius:50%;background:rgba(50,56,66,0.6);filter:blur(3px);transform:rotate(38deg)"></div>
<!-- ============ BOTTOM PANEL ============ -->
<svg class="a" style="left:816px;top:656px" width="8" height="10"><path d="M1.8 4.5 V3 A2.3 2.3 0 0 1 6.4 3 V3.6" stroke="#b0b0b0" stroke-width="1.2" fill="none"/><rect x="0.5" y="4.5" width="7" height="5" fill="#b0b0b0"/></svg>
<svg class="a" style="left:827.5px;top:658.7px" width="15" height="7"><path d="M0 1.8 L5 1.8 L2.5 4.8 Z" fill="#c4c4c4"/><g fill="#c8c8c8"><rect x="6" y="0" width="8.3" height="1.3"/><rect x="6" y="2.5" width="8.3" height="1.3"/><rect x="6" y="5" width="8.3" height="1.3"/></g></svg>
<div class="a tb" style="left:0;top:668px;width:845px;height:18px"></div>
<div class="a" style="left:0;top:686px;width:845px;height:18px;background:#3e3e3e;border-bottom:1px solid #262626"></div>
<div class="a" style="left:0;top:704px;width:845px;height:78px;background:#383838"></div>
<div class="a" style="left:463px;top:670px;width:300px;height:14px;border-radius:7px;background:#393939;border-top:1px solid #1a1a1a;box-shadow:inset 0 1px 1px #222"></div>
<svg class="a" style="left:468px;top:672px" width="10" height="10"><circle cx="4" cy="4" r="2.8" fill="none" stroke="#8a8a8a" stroke-width="1.2"/><path d="M6 6 L9 9" stroke="#8a8a8a" stroke-width="1.4"/></svg>
<div class="sep" style="left:773px;top:669px;height:16px"></div>
<div class="sep" style="left:795px;top:669px;height:16px"></div>
<div class="sep" style="left:817px;top:669px;height:16px"></div>
<div class="sep" style="left:844px;top:669px;height:16px"></div>
<svg class="a" style="left:777px;top:670px" width="64" height="14">
  <path d="M1 11 L5 4 L9 11Z" fill="#a8a8a8"/><circle cx="9" cy="5" r="2.6" fill="#a8a8a8"/><rect x="8" y="8" width="4.5" height="4.5" fill="#a8a8a8"/>
  <path d="M24 3 L29 3 L35 9 L30 13 L24 7 Z" fill="#a8a8a8"/><circle cx="26.5" cy="5.5" r="1" fill="#3a3a3a"/>
  <path d="M50 2.5 L51.6 6.2 L55.5 6.5 L52.6 9 L53.5 12.8 L50 10.7 L46.5 12.8 L47.4 9 L44.5 6.5 L48.4 6.2 Z" fill="#6e6e6e"/>
</svg>
<div class="t" style="left:-3px;top:708px;font-size:11px;color:#c0c0c0">e</div>
<div class="t" style="left:-6px;top:740px;font-size:11px;color:#bdbdbd;letter-spacing:0.3px">SYSTEM 2</div>

<!-- ============ GAME PANEL ============ -->
<div class="a" style="left:850px;top:24px;width:66px;height:17px;background:linear-gradient(#434343,#3b3b3b);border-radius:3px 3px 0 0;box-shadow:inset 0 1px 0 #4e4e4e"></div>
<svg class="a" style="left:859px;top:27px" width="10" height="10"><path d="M9.2 2.8 A4.6 4.6 0 1 0 9.2 7.2 L5.2 5 Z" fill="#e6e6e6"/></svg>
<div class="t" style="left:874px;top:28.5px;font-size:10px;color:#c8c8c8;letter-spacing:1.2px">Game</div>
<svg class="a" style="left:1405px;top:32.5px" width="15" height="7"><path d="M0 1.8 L5 1.8 L2.5 4.8 Z" fill="#c4c4c4"/><g fill="#c8c8c8"><rect x="6" y="0" width="8.3" height="1.3"/><rect x="6" y="2.5" width="8.3" height="1.3"/><rect x="6" y="5" width="8.3" height="1.3"/></g></svg>
<div class="a tb" style="left:849px;top:40px;width:576px;height:18px"></div>
<div class="sep" style="left:849px;top:41px;height:16px"></div>
<div class="sep" style="left:935px;top:41px;height:16px"></div>
<div class="sep" style="left:1100px;top:41px;height:16px"></div>
<div class="sep" style="left:1207px;top:41px;height:16px"></div>
<div class="sep" style="left:1308px;top:41px;height:16px"></div>
<div class="sep" style="left:1375px;top:41px;height:16px"></div>
<div class="sep" style="left:1414px;top:41px;height:16px"></div>
<div class="t" style="left:860px;top:45px;font-size:10px;color:#cdcdcd;letter-spacing:0.57px">Display 1</div>
<svg class="a" style="left:926px;top:47px" width="6" height="8"><path d="M0.5 3 L4.5 3 L2.5 0.5Z M0.5 4.5 L4.5 4.5 L2.5 7Z" fill="#8a8a8a"/></svg>
<div class="t" style="left:946px;top:45px;font-size:10px;color:#cdcdcd;letter-spacing:0.69px">Free Aspect</div>
<svg class="a" style="left:1092px;top:47px" width="6" height="8"><path d="M0.5 3 L4.5 3 L2.5 0.5Z M0.5 4.5 L4.5 4.5 L2.5 7Z" fill="#8a8a8a"/></svg>
<div class="t" style="left:1106px;top:45px;font-size:10px;color:#cdcdcd;letter-spacing:0.5px">Scale</div>
<div class="a" style="left:1142px;top:48px;width:28px;height:4px;border-radius:2px;background:#2a2a2a;border-top:1px solid #1e1e1e"></div>
<div class="a" style="left:1138px;top:45px;width:11px;height:11px;border-radius:50%;background:radial-gradient(circle at 40% 35%,#6e6e6e,#474747);border:1px solid #2a2a2a"></div>
<div class="t" style="left:1177px;top:45px;font-size:10px;color:#b8b8b8;letter-spacing:0.72px">1x</div>
<div class="t" style="left:1213px;top:45px;font-size:10px;color:#cdcdcd;letter-spacing:0.56px">Maximize On Play</div>
<div class="t" style="left:1312px;top:45px;font-size:10px;color:#cdcdcd;letter-spacing:0.66px">Mute Audio</div>
<div class="t" style="left:1379px;top:45px;font-size:10px;color:#cdcdcd;letter-spacing:0.64px">Stats</div>
<div class="t" style="left:1418px;top:45px;font-size:10px;color:#cdcdcd">G</div>
<svg class="a" style="left:849px;top:58px" width="574" height="86">
  <defs>
    <linearGradient id="sky" x1="0" y1="0" x2="0" y2="1">
      <stop offset="0" stop-color="#7492be"/><stop offset="0.2" stop-color="#90afd6"/><stop offset="0.3" stop-color="#acc9e3"/>
      <stop offset="0.38" stop-color="#d0eaf0"/><stop offset="0.44" stop-color="#e6f8f4"/><stop offset="0.52" stop-color="#eefbf5"/><stop offset="1" stop-color="#eefbf5"/>
    </linearGradient>
    <linearGradient id="skyh" x1="0" y1="0" x2="1" y2="0">
      <stop offset="0" stop-color="#9ab8e0" stop-opacity="0.35"/><stop offset="0.5" stop-color="#6a86b0" stop-opacity="0.1"/><stop offset="0.75" stop-color="#5a76a0" stop-opacity="0.25"/><stop offset="1" stop-color="#9ab8d0" stop-opacity="0.2"/>
    </linearGradient>
    <filter id="gb" x="-5%" y="-50%" width="110%" height="200%"><feGaussianBlur stdDeviation="2.6"/></filter>
    <filter id="gb2" x="-5%" y="-50%" width="110%" height="200%"><feGaussianBlur stdDeviation="2"/></filter>
  </defs>
  <rect width="574" height="86" fill="url(#sky)"/>
  <rect width="574" height="40" fill="url(#skyh)"/>
  <path d="M-10 50 L300 43 L300 90 L-10 90Z" fill="#b4bab2" filter="url(#gb)"/>
  <path d="M-10 54.5 L290 45.5 L290 90 L-10 90Z" fill="#6a625a" filter="url(#gb2)"/>
  <rect x="0" y="62" width="574" height="26" fill="#6a625a"/>
  <path d="M286 51 L584 51 L584 90 L286 90Z" fill="#6a625a"/>
  <path d="M420 51 L584 51 L584 57 Z" fill="#c0c4bc" filter="url(#gb2)" opacity="0.7"/>
  <rect x="286.3" y="43.4" width="288" height="7.6" fill="#ffffff"/>
  <path d="M312 42.8 l1.5 -1 l1.5 1 M322 41.8 l2.5 -0.8" stroke="#777" stroke-width="0.6" fill="none"/>
</svg>
<div class="a" style="left:1424px;top:83px;width:1px;height:61px;background:#fff"></div>
<div class="a" style="left:849px;top:144px;width:576px;height:4px;background:#282828"></div>

<!-- GAME_PLACEHOLDER2 -->
<!-- ============ INSPECTOR ============ -->
<div class="a" style="left:849px;top:165px;width:573px;height:617px;background:#383838"></div>
<div class="a" style="left:849px;top:165px;width:6px;height:617px;background:#3b3b3b"></div>
<div class="a" style="left:843px;top:58px;width:2px;height:589px;background:rgba(255,245,235,0.06)"></div>
<div class="a" style="left:1424px;top:83px;width:1px;height:699px;background:#e8e8e8"></div>
<div class="a" style="left:1422px;top:144px;width:2px;height:638px;background:#262626"></div>
<!-- tabs -->
<div class="a" style="left:850px;top:148px;width:85px;height:17px;background:#3c3c3c;border-radius:2px 2px 0 0;border-top:2px solid #4c82bc"></div>
<svg class="a" style="left:858px;top:151px" width="11" height="11"><circle cx="5.5" cy="5.5" r="5" fill="#dedede"/><rect x="4.6" y="4.5" width="1.8" height="4" fill="#333"/><rect x="4.6" y="2.3" width="1.8" height="1.6" fill="#333"/></svg>
<div class="t" style="left:873px;top:152px;font-size:11px;color:#c4c4c4;letter-spacing:0.95px">Inspector</div>
<svg class="a" style="left:946px;top:151px" width="12" height="11"><g fill="#d0d0d0"><rect x="0" y="1" width="11" height="1.2"/><rect x="0" y="5" width="11" height="1.2"/><rect x="0" y="9" width="11" height="1.2"/><rect x="6" y="0" width="1.5" height="3.2"/><rect x="3" y="4" width="1.5" height="3.2"/><rect x="7" y="8" width="1.5" height="3.2"/></g></svg>
<div class="t" style="left:961px;top:152px;font-size:11px;color:#c4c4c4;letter-spacing:0.73px">Lighting</div>
<div class="t" style="left:1022px;top:152px;font-size:11px;color:#c4c4c4;letter-spacing:0.9px">Services</div>
<svg class="a" style="left:1394px;top:153px" width="8" height="10"><path d="M1.8 4.5 V3 A2.3 2.3 0 0 1 6.4 3 V3.6" stroke="#8c8c8c" stroke-width="1.2" fill="none"/><rect x="0.5" y="4.5" width="7" height="5" fill="#8c8c8c"/></svg>
<svg class="a" style="left:1405px;top:155.5px" width="15" height="7"><path d="M0 1.8 L5 1.8 L2.5 4.8 Z" fill="#c4c4c4"/><g fill="#c8c8c8"><rect x="6" y="0" width="8.3" height="1.3"/><rect x="6" y="2.5" width="8.3" height="1.3"/><rect x="6" y="5" width="8.3" height="1.3"/></g></svg>

<!-- game object header -->
<svg class="a" style="left:855px;top:172px" width="23" height="23">
  <path d="M1.5 4.5 L12 1.5 L21 4 L21 15.5 L11 20 L1.5 16.5 Z" fill="#8e8e8e"/>
  <path d="M1.5 4.5 L12 1.5 L21 4 L10.5 7.5 Z" fill="#c2c2c2"/>
  <path d="M10.5 7.5 L21 4 L21 15.5 L11 20Z" fill="#9a9a9a"/>
  <path d="M1.5 4.5 L10.5 7.5 L11 20 L1.5 16.5Z" fill="#8a8a8a"/>
  <path d="M2 17 L10.5 17 L6 22 Z" fill="#e8e8e8"/>
</svg>
<div class="a chk" style="left:892px;top:175px"></div>
<div class="a" style="left:910px;top:172px;width:439px;height:15px;background:#3f3f3f;border-top:1px solid #232323"></div>
<div class="t" style="left:913px;top:175px;font-size:11px;color:#c8c8c8;letter-spacing:1.15px">Terrain</div>
<div class="a chk" style="left:1355px;top:175px"></div>
<div class="t" style="left:1372px;top:175px;font-size:11px;color:#c8c8c8;letter-spacing:0.6px">Static</div>
<svg class="a" style="left:1408px;top:177px" width="10" height="6"><path d="M0 0 L10 0 L5 5.5Z" fill="#c0c0c0"/></svg>
<div class="t" style="left:884px;top:195px;font-size:11px;color:#c8c8c8;letter-spacing:1.5px">Tag</div>
<div class="a dd" style="left:911px;top:193px;width:236px;height:14px"></div>
<div class="t" style="left:916px;top:195px;font-size:10px;color:#cfcfcf;letter-spacing:0.65px">Untagged</div>
<svg class="a" style="left:1137px;top:195px" width="6" height="10"><path d="M0 4 L5 4 L2.5 0.5Z M0 5.5 L5 5.5 L2.5 9Z" fill="#9a9a9a"/></svg>
<div class="t" style="left:1155px;top:195px;font-size:11px;color:#c8c8c8;letter-spacing:0.75px">Layer</div>
<div class="a dd" style="left:1194px;top:193px;width:223px;height:14px"></div>
<div class="t" style="left:1198px;top:195px;font-size:10px;color:#cfcfcf;letter-spacing:0.65px">Default</div>
<svg class="a" style="left:1407px;top:195px" width="6" height="10"><path d="M0 4 L5 4 L2.5 0.5Z M0 5.5 L5 5.5 L2.5 9Z" fill="#9a9a9a"/></svg>
<div class="ln" style="top:210px;background:#4b4b4b"></div>
<div class="ln" style="top:211px;background:#353535"></div>

<!-- Transform -->
<svg class="a" style="left:853px;top:218px" width="10" height="8"><path d="M0 0 L9 0 L4.5 8Z" fill="#6a6a6a"/></svg>
<svg class="a" style="left:864px;top:212px" width="16" height="17"><path d="M8 2 V10" stroke="#2a3a10" stroke-width="3.4"/><path d="M8 2.5 V9.5" stroke="#d8d828" stroke-width="2.2"/><path d="M8 9.5 L2.5 13.5" stroke="#28c0d8" stroke-width="2.6"/><path d="M8 9.5 L13.5 13.5" stroke="#d42a2a" stroke-width="2.6"/><path d="M2.5 13.5 L5 15.5" stroke="#6040a0" stroke-width="1.5"/></svg>
<div class="hdr" style="left:898px;top:217px">Transform</div>
<svg class="a" style="left:1373px;top:215px" width="12" height="14"><path d="M1 1.5 L10 0.5 L11 12 L2 13 Z" fill="#1e3a78"/><path d="M1 1.5 L10 0.5 L10 11.5 L1.5 12.5 Z" fill="#6e8ec8"/><path d="M2.5 2 L9.5 1.2 L9.5 11 L2.5 11.8 Z" fill="#3c5ea8"/><path d="M1 1.5 L2.5 2 L2.5 11.8 L1.5 12.5Z" fill="#a8c0e8"/><text x="4" y="9.5" font-size="8" font-family="Liberation Sans" font-weight="bold" fill="#d8e4f8">?</text></svg>
<svg class="a" style="left:1391px;top:215px" width="12" height="14"><g fill="#c4c4c4"><rect x="0" y="2.5" width="7" height="1.6"/><rect x="8.5" y="0" width="2.2" height="6"/><rect x="0" y="7" width="11" height="1.6"/><rect x="3.5" y="5" width="2.2" height="8"/><rect x="0" y="11" width="3" height="1.6"/><rect x="7" y="11" width="4" height="1.6"/></g></svg>
<svg class="a" style="left:1409px;top:214px" width="15" height="15"><path d="M9.95 5.34 L11.56 5.33 L11.56 6.67 L9.95 6.66 L9.25 8.33 L10.41 9.46 L9.46 10.41 L8.33 9.25 L6.66 9.95 L6.67 11.56 L5.33 11.56 L5.34 9.95 L3.67 9.25 L2.54 10.41 L1.59 9.46 L2.75 8.33 L2.05 6.66 L0.44 6.67 L0.44 5.33 L2.05 5.34 L2.75 3.67 L1.59 2.54 L2.54 1.59 L3.67 2.75 L5.34 2.05 L5.33 0.44 L6.67 0.44 L6.66 2.05 L8.33 2.75 L9.46 1.59 L10.41 2.54 L9.25 3.67 Z" fill="#c8c8c8" stroke="#c8c8c8" stroke-width="0.6"/><circle cx="6" cy="6" r="1.8" fill="#383838"/><path d="M10 10.5 L14.5 10.5 L12.25 14 Z" fill="#c8c8c8"/></svg>
<div class="lbl" style="left:864px;top:233px">Position</div>
<div class="lbl" style="left:864px;top:251px">Rotation</div>
<div class="lbl" style="left:864px;top:269px">Scale</div>
<!-- XYZ rows -->
<div class="xyz" style="top:230px"><span>X</span><i>0</i><span>Y</span><i>0</i><span>Z</span><i>0</i></div>
<div class="xyz" style="top:248px"><span>X</span><i>0</i><span>Y</span><i>0</i><span>Z</span><i>0</i></div>
<div class="xyz" style="top:266px"><span>X</span><i>1</i><span>Y</span><i>1</i><span>Z</span><i>1</i></div>
<div class="ln" style="top:285px;background:#2a2a2a"></div>
<div class="ln" style="top:286px;background:#4b4b4b"></div>

<!-- Terrain -->
<svg class="a" style="left:853px;top:293px" width="10" height="8"><path d="M0 0 L9 0 L4.5 8Z" fill="#6a6a6a"/></svg>
<svg class="a tcube" style="left:864px;top:288px" width="15" height="15"><path d="M1 4 L7.5 1 L14 4 L14 11 L7.5 14 L1 11Z" fill="#a86a28"/><path d="M1 4 L7.5 1 L14 4 L7.5 7Z" fill="#b8e840"/><path d="M1 4 L7.5 7 L7.5 9.5 L1 7Z" fill="#8cc020"/><path d="M14 4 L7.5 7 L7.5 9.5 L14 7Z" fill="#70a018"/><path d="M7.5 9.5 L14 7 L14 11 L7.5 14Z" fill="#7a4818"/></svg>
<div class="a chk" style="left:883px;top:290px"></div>
<div class="hdr" style="left:898px;top:291px">Terrain</div>
<svg class="a" style="left:1373px;top:290px" width="12" height="14"><path d="M1 1.5 L10 0.5 L11 12 L2 13 Z" fill="#1e3a78"/><path d="M1 1.5 L10 0.5 L10 11.5 L1.5 12.5 Z" fill="#6e8ec8"/><path d="M2.5 2 L9.5 1.2 L9.5 11 L2.5 11.8 Z" fill="#3c5ea8"/><path d="M1 1.5 L2.5 2 L2.5 11.8 L1.5 12.5Z" fill="#a8c0e8"/><text x="4" y="9.5" font-size="8" font-family="Liberation Sans" font-weight="bold" fill="#d8e4f8">?</text></svg>
<svg class="a" style="left:1391px;top:290px" width="12" height="14"><g fill="#c4c4c4"><rect x="0" y="2.5" width="7" height="1.6"/><rect x="8.5" y="0" width="2.2" height="6"/><rect x="0" y="7" width="11" height="1.6"/><rect x="3.5" y="5" width="2.2" height="8"/><rect x="0" y="11" width="3" height="1.6"/><rect x="7" y="11" width="4" height="1.6"/></g></svg>
<svg class="a" style="left:1409px;top:289px" width="15" height="15"><path d="M9.95 5.34 L11.56 5.33 L11.56 6.67 L9.95 6.66 L9.25 8.33 L10.41 9.46 L9.46 10.41 L8.33 9.25 L6.66 9.95 L6.67 11.56 L5.33 11.56 L5.34 9.95 L3.67 9.25 L2.54 10.41 L1.59 9.46 L2.75 8.33 L2.05 6.66 L0.44 6.67 L0.44 5.33 L2.05 5.34 L2.75 3.67 L1.59 2.54 L2.54 1.59 L3.67 2.75 L5.34 2.05 L5.33 0.44 L6.67 0.44 L6.66 2.05 L8.33 2.75 L9.46 1.59 L10.41 2.54 L9.25 3.67 Z" fill="#c8c8c8" stroke="#c8c8c8" stroke-width="0.6"/><circle cx="6" cy="6" r="1.8" fill="#383838"/><path d="M10 10.5 L14.5 10.5 L12.25 14 Z" fill="#c8c8c8"/></svg>
<!-- terrain toolbar -->
<div class="a" style="left:1076px;top:307px;width:126px;height:21px;border-radius:3px;background:linear-gradient(#4a4a4a,#3c3c3c);box-shadow:0 1px 0 #222, inset 0 1px 0 #575757"></div>
<div class="a" style="left:1076px;top:307px;width:31px;height:21px;border-radius:3px 0 0 3px;background:linear-gradient(#6e6e6e,#5e5e5e)"></div>
<div class="sep" style="left:1107px;top:308px;height:19px;background:#2c2c2c"></div>
<div class="sep" style="left:1139px;top:308px;height:19px;background:#2c2c2c"></div>
<div class="sep" style="left:1171px;top:308px;height:19px;background:#2c2c2c"></div>
<svg class="a" style="left:1076px;top:307px" width="126" height="21">
  <path d="M23.5 3 L14 13" stroke="#111" stroke-width="3.4" stroke-linecap="round"/><path d="M23.5 3 L14 13" stroke="#f0f0f0" stroke-width="1.8" stroke-linecap="round"/>
  <path d="M14.5 12 C12 12.5 10 14.5 8.5 17.5 C12 17 14.5 16 16 13.5Z" fill="#f0f0f0" stroke="#111" stroke-width="0.9"/>
  <path d="M9 17 C11 16.8 13 16 14.5 14.5" stroke="#a04080" stroke-width="0.9" fill="none"/>
  <circle cx="44" cy="7.5" r="3.6" fill="#fff"/><circle cx="48.5" cy="7.2" r="4" fill="#fff"/><circle cx="45" cy="10" r="3" fill="#fff"/>
  <path d="M43 11 L44 17.5 L41.5 17.5Z M48 11 L49 17.5 L46.5 17.5Z" fill="#0a0a0a"/><path d="M41 17.5 L45 17.5 M46 17.5 L50 17.5" stroke="#0a0a0a" stroke-width="1.8"/>
  <g fill="#fff"><circle cx="74" cy="6.5" r="2.4"/><circle cx="78" cy="6.5" r="2.4"/><circle cx="74" cy="10.5" r="2.4"/><circle cx="78" cy="10.5" r="2.4"/><circle cx="76" cy="8.5" r="2.2"/><circle cx="82.5" cy="7.5" r="1.8"/><circle cx="84.5" cy="11" r="2"/><circle cx="85" cy="5" r="1.5"/><circle cx="82" cy="12.5" r="1.6"/></g>
  <path d="M75 12.5 L75.5 19 M78 12.5 L77.5 19 M83 13.5 L82 19" stroke="#0a0a0a" stroke-width="1.1"/>
  <g transform="translate(111,10.5)"><g stroke="#c4c4c4" stroke-width="2.4"><path d="M0 -7V7M-7 0H7M-5 -5L5 5M5 -5L-5 5"/></g><circle r="4.8" fill="#c4c4c4"/><circle r="2" fill="#444"/></g>
</svg>
<!-- create neighbor dropdown -->
<div class="a" style="left:863px;top:334px;width:555px;height:14.5px;background:linear-gradient(#545454,#3e3e3e);border-top:1px solid #5464b4;border-bottom:1.5px solid #4a5ab4;box-shadow:0 1px 0 #262626;border-left:1px solid #4050a0;border-right:1px solid #4050a0;border-radius:2px"></div>
<div class="t" style="left:868px;top:337px;font-size:10px;color:#cfcfcf;letter-spacing:0.62px">Create Neighbor Terrains</div>
<svg class="a" style="left:1409px;top:337px" width="6" height="10"><path d="M0 4 L5 4 L2.5 0.5Z M0 5.5 L5 5.5 L2.5 9Z" fill="#9a9a9a"/></svg>
<div class="a" style="left:863px;top:354px;width:555px;height:21px;background:#3c3c3c;border:1px solid #2c2c2c;border-bottom-color:#262626;border-radius:2px"></div>
<div class="t" style="left:869px;top:359px;font-size:11px;color:#c4c4c4;letter-spacing:0.86px">Click the edges to create neighbor terrains</div>
<div class="ln" style="top:381px;background:#4b4b4b"></div>

<!-- Terrain Collider -->
<svg class="a" style="left:853px;top:387px" width="10" height="8"><path d="M0 0 L9 0 L4.5 8Z" fill="#6a6a6a"/></svg>
<svg class="a" style="left:864px;top:383px" width="15" height="15"><path d="M1 4 L7.5 1 L14 4 L14 11 L7.5 14 L1 11Z" fill="#8cc820"/><path d="M1 4 L7.5 1 L14 4 L7.5 7Z" fill="#c0f050"/><path d="M7.5 7 L14 4 L14 11 L7.5 14Z" fill="#78b018"/></svg>
<div class="a chk" style="left:883px;top:385px"></div>
<div class="hdr" style="left:898px;top:386px">Terrain Collider</div>
<svg class="a" style="left:1373px;top:385px" width="12" height="14"><path d="M1 1.5 L10 0.5 L11 12 L2 13 Z" fill="#1e3a78"/><path d="M1 1.5 L10 0.5 L10 11.5 L1.5 12.5 Z" fill="#6e8ec8"/><path d="M2.5 2 L9.5 1.2 L9.5 11 L2.5 11.8 Z" fill="#3c5ea8"/><path d="M1 1.5 L2.5 2 L2.5 11.8 L1.5 12.5Z" fill="#a8c0e8"/><text x="4" y="9.5" font-size="8" font-family="Liberation Sans" font-weight="bold" fill="#d8e4f8">?</text></svg>
<svg class="a" style="left:1391px;top:385px" width="12" height="14"><g fill="#c4c4c4"><rect x="0" y="2.5" width="7" height="1.6"/><rect x="8.5" y="0" width="2.2" height="6"/><rect x="0" y="7" width="11" height="1.6"/><rect x="3.5" y="5" width="2.2" height="8"/><rect x="0" y="11" width="3" height="1.6"/><rect x="7" y="11" width="4" height="1.6"/></g></svg>
<svg class="a" style="left:1409px;top:384px" width="15" height="15"><path d="M9.95 5.34 L11.56 5.33 L11.56 6.67 L9.95 6.66 L9.25 8.33 L10.41 9.46 L9.46 10.41 L8.33 9.25 L6.66 9.95 L6.67 11.56 L5.33 11.56 L5.34 9.95 L3.67 9.25 L2.54 10.41 L1.59 9.46 L2.75 8.33 L2.05 6.66 L0.44 6.67 L0.44 5.33 L2.05 5.34 L2.75 3.67 L1.59 2.54 L2.54 1.59 L3.67 2.75 L5.34 2.05 L5.33 0.44 L6.67 0.44 L6.66 2.05 L8.33 2.75 L9.46 1.59 L10.41 2.54 L9.25 3.67 Z" fill="#c8c8c8" stroke="#c8c8c8" stroke-width="0.6"/><circle cx="6" cy="6" r="1.8" fill="#383838"/><path d="M10 10.5 L14.5 10.5 L12.25 14 Z" fill="#c8c8c8"/></svg>
<div class="lbl" style="left:864px;top:403px">Material</div>
<div class="lbl" style="left:864px;top:421px">Terrain Data</div>
<div class="lbl" style="left:864px;top:439px">Enable Tree Colliders</div>
<div class="a" style="left:1081px;top:400px;width:320px;height:16px;background:#484848;border-top:1px solid #222;border-radius:1px"></div>
<div class="t" style="left:1084px;top:403px;font-size:11px;color:#bdbdbd;letter-spacing:0.79px">None (Physic Material)</div>
<div class="a" style="left:1081px;top:418px;width:320px;height:15px;background:#484848;border-top:1px solid #222;border-radius:1px"></div>
<svg class="a" style="left:1084px;top:420px" width="12" height="11"><path d="M1 3 L6 1 L11 3 L11 8.5 L6 10.5 L1 8.5Z" fill="#9a9a9a"/><path d="M1 3 L6 1 L11 3 L6 5Z" fill="#c8c8c8"/><path d="M6 5 L11 3 L11 8.5 L6 10.5Z" fill="#7e7e7e"/></svg>
<div class="t" style="left:1097px;top:421px;font-size:11px;color:#bdbdbd;letter-spacing:0.79px">New Terrain</div>
<svg class="a" style="left:1408px;top:403px" width="11" height="30"><circle cx="5.5" cy="5" r="3.8" fill="none" stroke="#a8a8a8" stroke-width="1"/><circle cx="5.5" cy="5" r="1.4" fill="#a8a8a8"/><circle cx="5.5" cy="23" r="3.8" fill="none" stroke="#a8a8a8" stroke-width="1"/><circle cx="5.5" cy="23" r="1.4" fill="#a8a8a8"/></svg>
<div class="a chk" style="left:1082px;top:439px"></div>
<div class="ln" style="top:456px;background:#4b4b4b"></div>
<!-- Add component -->
<div class="a btn" style="left:1020px;top:466px;width:228px;height:21px;border-radius:3px;background:linear-gradient(#585858,#474747);box-shadow:0 1px 1px #1e1e1e, inset 0 1px 0 #6a6a6a"></div>
<div class="t" style="left:1082px;top:468px;font-size:13px;color:#c8c8c8;letter-spacing:0.63px">Add Component</div>

<!-- red annotation -->
<svg class="a" style="left:0;top:0" width="1425" height="782">
  <path d="M856 328 C880 327 920 327 974 330 L1048 331.3 L1072 329.3 L1110 329 C1118 329.5 1124 332 1128 337 C1132 342 1133.4 347 1133.4 352 L1133 358.2 L1109.5 360.9 L1048 360.8 L946 359.4 C925 357 890 353 862 353 C856 352 854.5 347 854.3 340 C854 333 854 329 856 328 Z" fill="none" stroke="#e01818" stroke-width="2.6" stroke-linejoin="round"/>
</svg>

<!-- BOTTOM_PLACEHOLDER -->

</body></html>
